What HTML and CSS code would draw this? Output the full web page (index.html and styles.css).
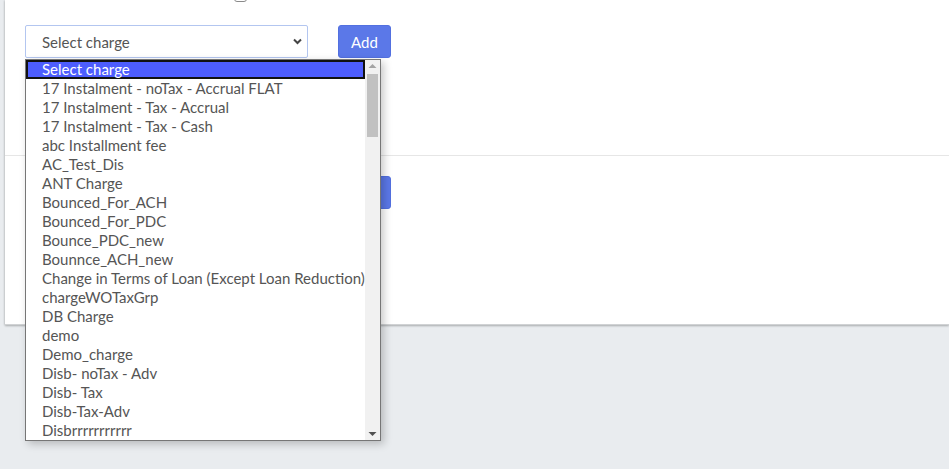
FILE: index.html
```html
<!DOCTYPE html>
<html>
<head>
<meta charset="utf-8">
<link rel="stylesheet" href="styles.css">
</head>
<body>
<div class="page">
  <div class="card">
    <div class="check-row"><span class="checkbox"></span></div>
    <div class="section top">
      <div class="charge-row">
        <div class="select-wrap">
          <div class="select">
            <span class="select-text">Select charge</span>
            <svg class="chev" width="9" height="7" viewBox="0 0 9 7"><path d="M1 1.5 L4.5 5 L8 1.5" fill="none" stroke="#444" stroke-width="2"/></svg>
          </div>
          <div class="dropdown">
            <ul class="options">
              <li class="opt active">Select charge</li>
              <li class="opt">17 Instalment - noTax - Accrual FLAT</li>
              <li class="opt">17 Instalment - Tax - Accrual</li>
              <li class="opt">17 Instalment - Tax - Cash</li>
              <li class="opt">abc Installment fee</li>
              <li class="opt">AC_Test_Dis</li>
              <li class="opt">ANT Charge</li>
              <li class="opt">Bounced_For_ACH</li>
              <li class="opt">Bounced_For_PDC</li>
              <li class="opt">Bounce_PDC_new</li>
              <li class="opt">Bounnce_ACH_new</li>
              <li class="opt">Change in Terms of Loan (Except Loan Reduction)</li>
              <li class="opt">chargeWOTaxGrp</li>
              <li class="opt">DB Charge</li>
              <li class="opt">demo</li>
              <li class="opt">Demo_charge</li>
              <li class="opt">Disb- noTax - Adv</li>
              <li class="opt">Disb- Tax</li>
              <li class="opt">Disb-Tax-Adv</li>
              <li class="opt">Disbrrrrrrrrrrr</li>
            </ul>
            <div class="scrollbar">
              <svg class="arrow" width="15" height="12" viewBox="0 0 15 12"><path d="M3.5 8 L7.5 4 L11.5 8 Z" fill="#a3a3a3"/></svg>
              <div class="track"><div class="thumb"></div></div>
              <svg class="arrow" width="15" height="12" viewBox="0 0 15 12"><path d="M3.5 4 L7.5 8 L11.5 4 Z" fill="#505050"/></svg>
            </div>
          </div>
        </div>
        <button class="btn">Add</button>
      </div>
    </div>
    <div class="section bottom">
      <div class="btn-row"><button class="btn wide">Save</button></div>
    </div>
  </div>
</div>
</body>
</html>
```
FILE: styles.css
```css
* { box-sizing: border-box; }
html, body { margin: 0; padding: 0; }
body {
  background: #e9ecef;
  font-family: "Lato", "Open Sans", sans-serif;
  font-size: 15px;
  color: #555;
  width: 949px;
  height: 469px;
  overflow: hidden;
}
.page { padding-left: 5px; }
.card {
  background: #fff;
  height: 325px;
  box-shadow: 0 1px 2px rgba(0,0,0,0.25), -1px 0 2px rgba(0,0,0,0.08);
  border-bottom: 1px solid #d0d2d4;
}
.check-row { display: flex; height: 0; padding-left: 229px; }
.checkbox {
  display: block;
  width: 13px;
  height: 13px;
  margin-top: -11px;
  border: 1px solid #8a8a8a;
  border-radius: 3px;
}
.section.top {
  height: 156px;
  border-bottom: 1px solid #e6e6e6;
  padding: 25px 0 0 20px;
}
.charge-row { display: flex; gap: 30px; align-items: flex-start; }
.select-wrap { position: relative; }
.select {
  width: 283px;
  height: 33px;
  border: 1px solid #b3c6f0;
  border-radius: 2px;
  display: flex;
  align-items: center;
  justify-content: space-between;
  padding: 0 5px 0 16px;
  color: #555;
}
.btn {
  background: #5b78e8;
  border: 1px solid #5270e0;
  border-radius: 3px;
  color: #fff;
  font-family: inherit;
  font-size: 15px;
  height: 33px;
  width: 53px;
  padding: 0;
}
.section.bottom { padding: 20px 0 0 20px; }
.btn-row { display: flex; padding-left: 313px; }
.btn.wide { height: 33px; width: 53px; }
.dropdown {
  position: absolute;
  left: 0;
  top: 34px;
  width: 356px;
  height: 382px;
  border: 1px solid #767676;
  background: #fff;
  display: flex;
  box-shadow: 3px 3px 8px rgba(0,0,0,0.22);
  z-index: 5;
}
.options {
  list-style: none;
  margin: 0;
  padding: 0;
  flex: 1;
  overflow: hidden;
}
.opt {
  height: 19px;
  line-height: 19px;
  padding-left: 16px;
  white-space: nowrap;
  color: #555;
}
.opt.active {
  background: #4d5dfe;
  color: #fff;
  border: 2px solid #111;
  line-height: 15px;
  padding-left: 14px;
}
.scrollbar {
  width: 15px;
  background: #f1f1f1;
  display: flex;
  flex-direction: column;
}
.arrow { display: block; flex: none; }
.track { flex: 1; padding: 2px 2px; }
.thumb { width: 11px; height: 63px; background: #c1c1c1; }
```
